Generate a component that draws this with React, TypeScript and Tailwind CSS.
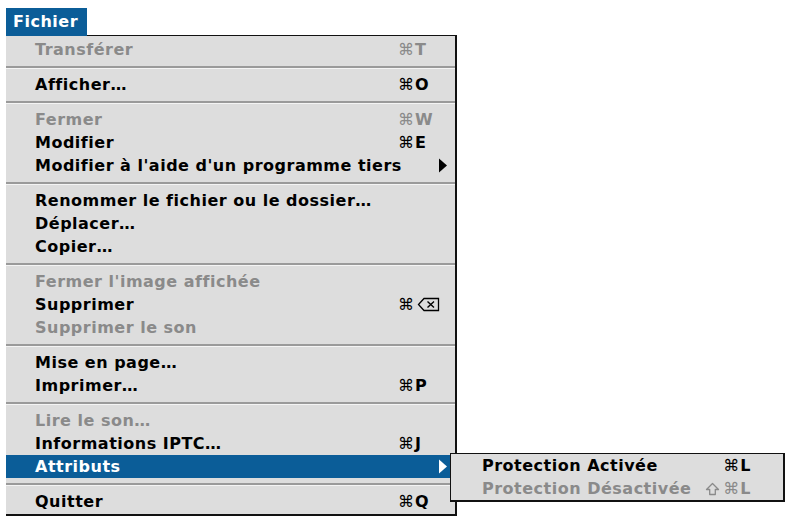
import React from "react";

type Item =
  | { sep: true }
  | {
      sep?: false;
      label: string;
      sc?: React.ReactNode;
      disabled?: boolean;
      sub?: boolean;
      active?: boolean;
    };

const Cmd = () => <span className="font-normal tracking-normal mr-[1px]">⌘</span>;

const DeleteGlyph = ({ color }: { color: string }) => (
  <svg width="23" height="15" viewBox="0 0 23 15" className="ml-[2px]">
    <path d="M7 1.5 H21.5 V13.5 H7 L1.5 7.5 Z" fill="none" stroke={color} strokeWidth="1.3" />
    <path d="M10.5 4.5 L17 10.5 M17 4.5 L10.5 10.5" stroke={color} strokeWidth="1.4" />
  </svg>
);

const ShiftGlyph = ({ color }: { color: string }) => (
  <svg width="15" height="14" viewBox="0 0 15 14" className="mr-[3px]">
    <path d="M7.5 1.5 L13.5 7.5 H10.3 V12.5 H4.7 V7.5 H1.5 Z" fill="none" stroke={color} strokeWidth="1.3" strokeLinejoin="round" />
  </svg>
);

const Arrow = ({ color }: { color: string }) => (
  <svg width="10" height="15" viewBox="0 0 10 15">
    <path d="M1 0.5 L9 7.5 L1 14.5 Z" fill={color} />
  </svg>
);

const items: Item[] = [
  { label: "Transférer", sc: <><Cmd />T</>, disabled: true },
  { sep: true },
  { label: "Afficher…", sc: <><Cmd />O</> },
  { sep: true },
  { label: "Fermer", sc: <><Cmd />W</>, disabled: true },
  { label: "Modifier", sc: <><Cmd />E</> },
  { label: "Modifier à l'aide d'un programme tiers", sub: true },
  { sep: true },
  { label: "Renommer le fichier ou le dossier…" },
  { label: "Déplacer…" },
  { label: "Copier…" },
  { sep: true },
  { label: "Fermer l'image affichée", disabled: true },
  { label: "Supprimer", sc: <span className="flex items-center"><Cmd /><DeleteGlyph color="#000" /></span> },
  { label: "Supprimer le son", disabled: true },
  { sep: true },
  { label: "Mise en page…" },
  { label: "Imprimer…", sc: <><Cmd />P</> },
  { sep: true },
  { label: "Lire le son…", disabled: true },
  { label: "Informations IPTC…", sc: <><Cmd />J</> },
  { label: "Attributs", sub: true, active: true },
  { sep: true },
  { label: "Quitter", sc: <><Cmd />Q</> },
];

export default function App() {
  return (
    <div className="relative w-[787px] h-[517px] bg-white font-['DejaVu_Sans',sans-serif] text-[16px] font-bold tracking-[0.5px] text-black leading-none overflow-hidden">
      <div className="pt-[8px] pl-[6px]">
        <div className="flex w-[451px]">
          <div className="w-[81px] h-[28px] bg-[#0b5d98] text-white flex items-center pl-[7px]">
            Fichier
          </div>
          <div className="flex-1 border-b border-[#111]" />
        </div>
        <div className="w-[451px] bg-[#dddddd] border-r-2 border-b-2 border-[#111] pt-[2px] pb-[1px]">
          {items.map((it, i) =>
            it.sep ? (
              <div key={i} className="h-[12px] flex flex-col justify-center">
                <div className="h-[2px] bg-[#9a9a9a]" />
                <div className="h-px bg-[#f4f4f4]" />
              </div>
            ) : (
              <div
                key={i}
                className={
                  "h-[23px] flex items-center pl-[29px] " +
                  (it.active ? "bg-[#0b5d98] text-white" : it.disabled ? "text-[#8a8a8a]" : "text-black")
                }
              >
                <span className="w-[363px] shrink-0 whitespace-nowrap">{it.label}</span>
                <span className="w-[40px] shrink-0 flex items-center whitespace-nowrap">{it.sc}</span>
                {it.sub && <Arrow color={it.active ? "#ffffff" : "#000000"} />}
              </div>
            )
          )}
        </div>
      </div>

      <div className="absolute left-[450px] top-[453px] w-[335px] bg-[#dddddd] border-t border-l border-r-2 border-b-2 border-[#111]">
        <div className="h-[23px] flex items-center justify-between pl-[31px] pr-[32px] text-black">
          <span>Protection Activée</span>
          <span><Cmd />L</span>
        </div>
        <div className="h-[23px] flex items-center justify-between pl-[31px] pr-[32px] text-[#8a8a8a]">
          <span>Protection Désactivée</span>
          <span className="flex items-center"><ShiftGlyph color="#8a8a8a" /><Cmd />L</span>
        </div>
      </div>
    </div>
  );
}
